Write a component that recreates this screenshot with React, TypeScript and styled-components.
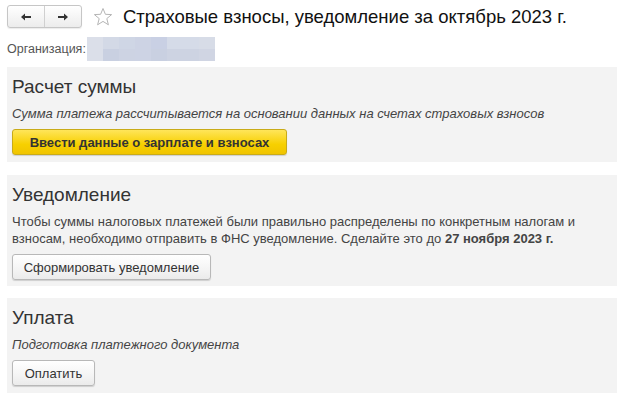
import React from "react";
import styled, { createGlobalStyle } from "styled-components";

const FONT = `"Liberation Sans", Arial, sans-serif`;

const Global = createGlobalStyle`
  html, body { margin: 0; padding: 0; background: #fff; }
  body { font-family: ${FONT}; color: #333; }
`;

const Page = styled.div`
  width: 639px;
  padding: 5px 22px 0 7px;
  box-sizing: border-box;
  display: flex;
  flex-direction: column;
`;

const Header = styled.div`
  display: flex;
  align-items: center;
  height: 23px;
`;

const NavGroup = styled.div`
  display: flex;
  height: 23px;
  border: 1px solid #c6c6c6;
  border-radius: 3px;
  box-sizing: border-box;
  background: linear-gradient(#ffffff, #ececec);
  box-shadow: 0 1px 1px rgba(0, 0, 0, 0.08);
`;

const NavButton = styled.div<{ $divider?: boolean }>`
  width: 36px;
  display: flex;
  align-items: center;
  justify-content: center;
  border-left: ${(p) => (p.$divider ? "1px solid #d0d0d0" : "none")};
`;

const StarBox = styled.div`
  width: 20px;
  height: 20px;
  margin-left: 11px;
  display: flex;
  align-items: center;
  justify-content: center;
`;

const Title = styled.h1`
  margin: 0 0 0 10px;
  font-size: 18.5px;
  font-weight: normal;
  color: #111;
  white-space: nowrap;
`;

const OrgRow = styled.div`
  display: flex;
  align-items: center;
  margin-top: 9px;
  height: 24px;
`;

const OrgLabel = styled.span`
  font-size: 12.5px;
  color: #555;
`;

const Blur = styled.div`
  width: 128px;
  height: 24px;
  margin-left: 1px;
  display: grid;
  grid-template-columns: repeat(8, 1fr);
  grid-template-rows: 1fr 1fr;
`;

const BlurCell = styled.div<{ $c: string }>`
  background: ${(p) => p.$c};
`;

const Panel = styled.section<{ $top: number; $h: number }>`
  margin-top: ${(p) => p.$top}px;
  height: ${(p) => p.$h}px;
  box-sizing: border-box;
  background: #f3f3f3;
  padding: 8px 5px 0 5px;
  display: flex;
  flex-direction: column;
  align-items: flex-start;
`;

const PanelTitle = styled.h2`
  margin: 0;
  font-size: 19px;
  font-weight: normal;
  color: #333;
  line-height: 24px;
`;

const Note = styled.p<{ $italic?: boolean }>`
  margin: 6px 0 0 0;
  font-size: 13px;
  line-height: 17px;
  color: #444;
  font-style: ${(p) => (p.$italic ? "italic" : "normal")};
`;

const Button = styled.button<{ $w: number; $primary?: boolean }>`
  margin-top: 7px;
  width: ${(p) => p.$w}px;
  height: 26px;
  box-sizing: border-box;
  border-radius: 3px;
  font-family: ${FONT};
  font-size: 13px;
  font-weight: ${(p) => (p.$primary ? "bold" : "normal")};
  color: #333;
  border: 1px solid ${(p) => (p.$primary ? "#c9ab18" : "#b8b8b8")};
  background: ${(p) =>
    p.$primary
      ? "linear-gradient(#ffe55a, #f7d000 60%, #f0c400)"
      : "linear-gradient(#ffffff, #f4f4f4 60%, #ebebeb)"};
  box-shadow: 0 1px 1px rgba(0, 0, 0, 0.15);
  padding: 0;
`;

const Arrow = ({ dir }: { dir: "l" | "r" }) => (
  <svg width="12" height="10" viewBox="0 0 12 10">
    {dir === "l" ? (
      <path d="M1 5 L5 1.5 L5 4 L11 4 L11 6 L5 6 L5 8.5 Z" fill="#333" />
    ) : (
      <path d="M11 5 L7 1.5 L7 4 L1 4 L1 6 L7 6 L7 8.5 Z" fill="#333" />
    )}
  </svg>
);

const Star = () => (
  <svg width="20" height="20" viewBox="0 0 20 20">
    <path
      d="M10 1.5 L12.4 7.3 L18.6 7.6 L13.8 11.6 L15.4 17.8 L10 14.4 L4.6 17.8 L6.2 11.6 L1.4 7.6 L7.6 7.3 Z"
      fill="none"
      stroke="#b5b5b5"
      strokeWidth="1"
      strokeLinejoin="round"
    />
  </svg>
);

const blurColors = [
  "#dbdfe9", "#d3d9e6", "#cfd6e5", "#cdd3e4", "#c9d0e4", "#d5dbe8", "#d5dbe8", "#d7dce7",
  "#dbdfe9", "#c9d0e1", "#cdd3e3", "#cdd3e4", "#c9d0e1", "#cdd3e2", "#cdd3e2", "#d0d5e3",
];

export default function App() {
  return (
    <>
      <Global />
      <Page>
        <Header>
          <NavGroup>
            <NavButton>
              <Arrow dir="l" />
            </NavButton>
            <NavButton $divider>
              <Arrow dir="r" />
            </NavButton>
          </NavGroup>
          <StarBox>
            <Star />
          </StarBox>
          <Title>Страховые взносы, уведомление за октябрь 2023 г.</Title>
        </Header>
        <OrgRow>
          <OrgLabel>Организация:</OrgLabel>
          <Blur>
            {blurColors.map((c, i) => (
              <BlurCell key={i} $c={c} />
            ))}
          </Blur>
        </OrgRow>
        <Panel $top={6} $h={95}>
          <PanelTitle>Расчет суммы</PanelTitle>
          <Note $italic>
            Сумма платежа рассчитывается на основании данных на счетах страховых взносов
          </Note>
          <Button $w={275} $primary>
            Ввести данные о зарплате и взносах
          </Button>
        </Panel>
        <Panel $top={13} $h={111}>
          <PanelTitle>Уведомление</PanelTitle>
          <Note>
            Чтобы суммы налоговых платежей были правильно распределены по конкретным налогам и
            <br />
            взносам, необходимо отправить в ФНС уведомление. Сделайте это до{" "}
            <b>27 ноября 2023 г.</b>
          </Note>
          <Button $w={199}>Сформировать уведомление</Button>
        </Panel>
        <Panel $top={12} $h={95}>
          <PanelTitle>Уплата</PanelTitle>
          <Note $italic>Подготовка платежного документа</Note>
          <Button $w={83}>Оплатить</Button>
        </Panel>
      </Page>
    </>
  );
}
